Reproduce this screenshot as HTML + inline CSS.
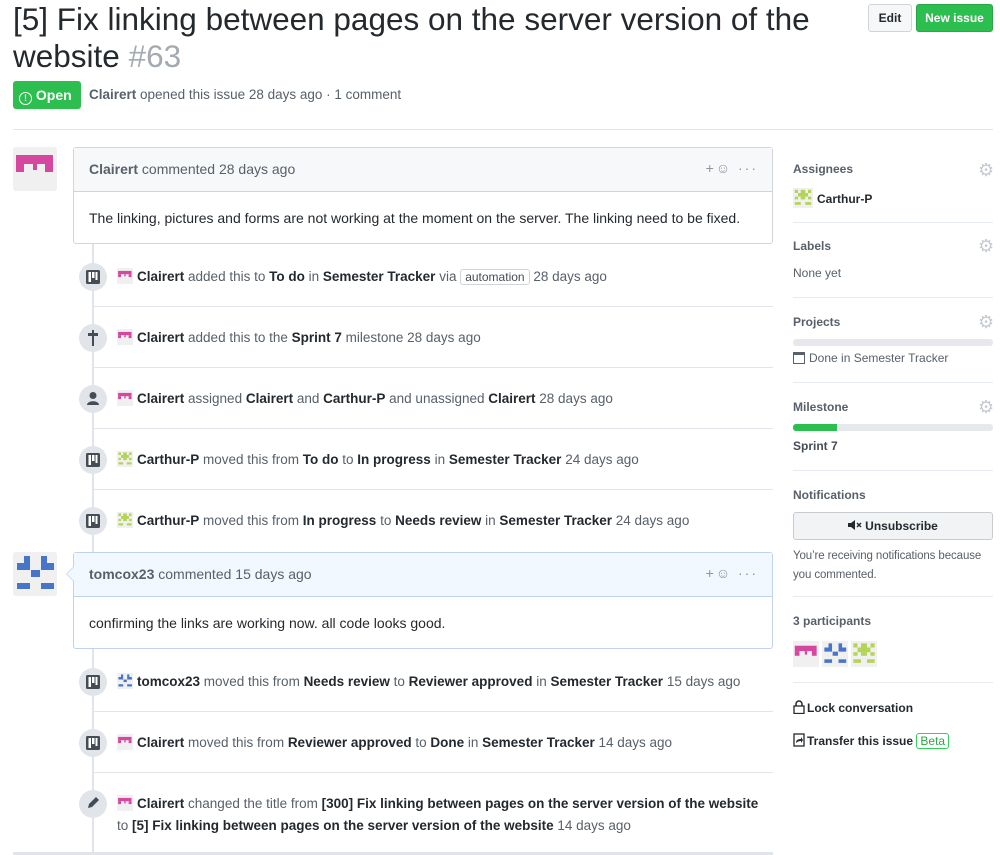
<!DOCTYPE html>
<html><head><meta charset="utf-8"><style>
*{box-sizing:border-box;margin:0;padding:0}
body{width:1000px;height:855px;overflow:hidden;background:#fff;font-family:"Liberation Sans",Arial,sans-serif;color:#24292e;font-size:13.5px;position:relative}
.a{position:absolute}
b{font-weight:bold;color:#24292e}
.g{color:#586069}
h1{position:absolute;left:13px;top:1px;width:830px;font-weight:normal;font-size:31.5px;line-height:37px;color:#24292e}
h1 span{color:#a3aab1}
.btn{position:absolute;top:4px;height:28px;border-radius:3px;font-size:12px;font-weight:bold;line-height:26px;text-align:center}
.av{position:absolute;width:44px;height:44px;border-radius:3px;background:#f0f0f0}
.box{position:absolute;left:73px;width:700px;border:1px solid #d1d5da;border-radius:3px;background:#fff}
.box .hd{height:44px;background:#f6f8fa;border-bottom:1px solid #d1d5da;padding:13px 15px;color:#586069;font-size:14px}
.box .bd{padding:0 15px;font-size:14px;line-height:52px}
.hdr-ic{position:absolute;right:14px;top:12px;color:#8d959e;font-size:14px;letter-spacing:2px}
.line{position:absolute;left:92px;width:2px;background:#e1e4e8}
.ev{position:absolute;left:117px;font-size:13.5px;color:#586069;white-space:nowrap;line-height:22px}
.badge{position:absolute;left:79px;width:28px;height:28px;border-radius:50%;background:#e1e4e8}
.sep{position:absolute;left:93px;width:680px;height:1px;background:#e1e4e8}
.sm{display:inline-block;width:16px;height:16px;vertical-align:-3px;margin-right:4px}
.sb{position:absolute;left:793px;width:200px}
.sbt{font-size:12px;color:#586069;font-weight:bold}
.gear{position:absolute;left:978px;color:#c6cbd1;font-size:18px;line-height:18px}
.hr{position:absolute;left:793px;width:200px;height:1px;background:#e6ebf1}
code{font-family:"Liberation Sans",sans-serif;font-size:12px;border:1px solid #d1d5da;border-radius:3px;padding:0 4px;color:#444d56}
</style></head><body>
<svg width="0" height="0" style="position:absolute">
<defs>
<symbol id="pk" viewBox="0 0 44 44"><rect width="44" height="44" fill="#f0f0f0"/><g fill="#d6479f"><rect x="3" y="8" width="37" height="9"/><rect x="3" y="17" width="8" height="8"/><rect x="32" y="17" width="8" height="8"/><rect x="20" y="17" width="4" height="6"/></g></symbol>
<symbol id="bl" viewBox="0 0 44 44"><rect width="44" height="44" fill="#f0f0f0"/><g fill="#4776c9"><rect x="11" y="4" width="6" height="7"/><rect x="28" y="4" width="6" height="7"/><rect x="4" y="11" width="13" height="7"/><rect x="28" y="11" width="13" height="7"/><rect x="18" y="18" width="9" height="7"/><rect x="4" y="31" width="13" height="6"/><rect x="28" y="31" width="13" height="6"/></g></symbol>
<symbol id="gr" viewBox="0 0 44 44"><rect width="44" height="44" fill="#f0f0f0"/><g fill="#b4d455"><rect x="4" y="4" width="7" height="7"/><rect x="17" y="4" width="10" height="7"/><rect x="33" y="4" width="7" height="7"/><rect x="11" y="11" width="22" height="8"/><rect x="4" y="19" width="7" height="6"/><rect x="17" y="19" width="10" height="6"/><rect x="33" y="19" width="7" height="6"/><rect x="4" y="31" width="13" height="6"/><rect x="27" y="31" width="13" height="6"/></g></symbol>
<symbol id="proj" viewBox="0 0 16 16"><rect x="1" y="1" width="14" height="14" rx="1.5" fill="#444d56"/><rect x="3.5" y="3" width="2.5" height="10" fill="#fff"/><rect x="7" y="3" width="2.5" height="6" fill="#fff"/><rect x="10.5" y="3" width="2" height="8" fill="#fff"/></symbol>
</defs></svg>

<h1>[5] Fix linking between pages on the server version of the website <span>#63</span></h1>
<div class="btn" style="left:868px;width:44px;background:#f5f7f9;border:1px solid #d1d5da;color:#24292e">Edit</div>
<div class="btn" style="left:916px;width:77px;background:#2cbe4e;border:1px solid #28a745;color:#fff">New issue</div>

<div class="a" style="left:13px;top:81px;width:68px;height:28px;border-radius:3px;background:#2cbe4e;color:#fff;font-weight:bold;font-size:14px;line-height:28px;padding-left:6px"><span style="display:inline-block;width:13px;height:13px;border:1.6px solid #fff;border-radius:50%;font-size:9px;line-height:10px;text-align:center;vertical-align:-1px">!</span> Open</div>
<div class="a g" style="left:89px;top:87px;font-size:13.5px"><b style="color:#586069">Clairert</b> opened this issue 28 days ago · 1 comment</div>
<div class="a" style="left:13px;top:129px;width:980px;height:1px;background:#e1e4e8"></div>

<div class="line" style="top:243px;height:310px"></div>
<div class="line" style="top:648px;height:207px"></div>

<svg class="av" style="left:13px;top:147px"><use href="#pk"/></svg>
<div class="box" style="top:147px;height:97px"><div class="hd"><b style="color:#586069">Clairert</b> commented 28 days ago<span class="hdr-ic">+☺ ···</span></div><div class="bd">The linking, pictures and forms are not working at the moment on the server. The linking need to be fixed.</div></div>

<div class="badge" style="top:263px"></div><svg class="a" style="left:85px;top:269px" width="16" height="16"><use href="#proj"/></svg>
<div class="ev" style="top:266px"><svg class="sm"><use href="#pk"/></svg><b>Clairert</b> added this to <b>To do</b> in <b>Semester Tracker</b> via <code>automation</code> 28 days ago</div>
<div class="sep" style="top:306px"></div>

<div class="badge" style="top:324px"></div><svg class="a" style="left:86px;top:330px" width="14" height="16"><rect x="6" y="0" width="2" height="16" fill="#444d56"/><rect x="2" y="3" width="10" height="3" fill="#444d56"/></svg>
<div class="ev" style="top:327px"><svg class="sm"><use href="#pk"/></svg><b>Clairert</b> added this to the <b>Sprint 7</b> milestone 28 days ago</div>
<div class="sep" style="top:367px"></div>

<div class="badge" style="top:385px"></div><svg class="a" style="left:86px;top:391px" width="14" height="16"><circle cx="7" cy="4.5" r="3.5" fill="#444d56"/><path d="M1 14c0-5 12-5 12 0z" fill="#444d56"/></svg>
<div class="ev" style="top:388px"><svg class="sm"><use href="#pk"/></svg><b>Clairert</b> assigned <b>Clairert</b> and <b>Carthur-P</b> and unassigned <b>Clairert</b> 28 days ago</div>
<div class="sep" style="top:428px"></div>

<div class="badge" style="top:446px"></div><svg class="a" style="left:85px;top:452px" width="16" height="16"><use href="#proj"/></svg>
<div class="ev" style="top:449px"><svg class="sm"><use href="#gr"/></svg><b>Carthur-P</b> moved this from <b>To do</b> to <b>In progress</b> in <b>Semester Tracker</b> 24 days ago</div>
<div class="sep" style="top:489px"></div>

<div class="badge" style="top:507px"></div><svg class="a" style="left:85px;top:513px" width="16" height="16"><use href="#proj"/></svg>
<div class="ev" style="top:510px"><svg class="sm"><use href="#gr"/></svg><b>Carthur-P</b> moved this from <b>In progress</b> to <b>Needs review</b> in <b>Semester Tracker</b> 24 days ago</div>

<svg class="av" style="left:13px;top:552px"><use href="#bl"/></svg>
<div class="box" style="top:552px;height:97px;border-color:#c0d3eb"><div class="hd" style="background:#f1f8ff;border-color:#c0d3eb"><b style="color:#586069">tomcox23</b> commented 15 days ago<span class="hdr-ic">+☺ ···</span></div><div class="bd">confirming the links are working now. all code looks good.</div></div>
<div class="a" style="left:66px;top:566px;width:0;height:0;border:8px solid transparent;border-right-color:#c0d3eb;border-left:0"></div>
<div class="a" style="left:67px;top:567px;width:0;height:0;border:7px solid transparent;border-right-color:#f1f8ff;border-left:0"></div>

<div class="badge" style="top:668px"></div><svg class="a" style="left:85px;top:674px" width="16" height="16"><use href="#proj"/></svg>
<div class="ev" style="top:671px"><svg class="sm"><use href="#bl"/></svg><b>tomcox23</b> moved this from <b>Needs review</b> to <b>Reviewer approved</b> in <b>Semester Tracker</b> 15 days ago</div>
<div class="sep" style="top:711px"></div>

<div class="badge" style="top:729px"></div><svg class="a" style="left:85px;top:735px" width="16" height="16"><use href="#proj"/></svg>
<div class="ev" style="top:732px"><svg class="sm"><use href="#pk"/></svg><b>Clairert</b> moved this from <b>Reviewer approved</b> to <b>Done</b> in <b>Semester Tracker</b> 14 days ago</div>
<div class="sep" style="top:772px"></div>

<div class="badge" style="top:790px"></div><svg class="a" style="left:86px;top:796px" width="14" height="14"><path d="M2 12l1-4 7-7 3 3-7 7z" fill="#444d56"/></svg>
<div class="ev" style="top:793px"><svg class="sm"><use href="#pk"/></svg><b>Clairert</b> changed the title from <b>[300] Fix linking between pages on the server version of the website</b><br>to <b>[5] Fix linking between pages on the server version of the website</b> 14 days ago</div>
<div class="a" style="left:13px;top:852px;width:760px;height:3px;background:#e1e4e8"></div>

<div class="sb sbt" style="top:162px">Assignees</div><div class="gear" style="top:161px">⚙</div>
<div class="sb" style="top:188px;font-size:12px;font-weight:bold"><svg class="sm" style="width:20px;height:20px;vertical-align:-5px"><use href="#gr"/></svg>Carthur-P</div>
<div class="hr" style="top:222px"></div>
<div class="sb sbt" style="top:239px">Labels</div><div class="gear" style="top:237px">⚙</div>
<div class="sb g" style="top:266px;font-size:12px">None yet</div>
<div class="hr" style="top:297px"></div>
<div class="sb sbt" style="top:315px">Projects</div><div class="gear" style="top:313px">⚙</div>
<div class="sb" style="top:339px;height:7px;background:#e6e8eb;border-radius:3px"></div>
<div class="sb g" style="top:351px;font-size:12px"><span style="display:inline-block;width:12px;height:12px;border:1.5px solid #586069;vertical-align:-2px;margin-right:4px;border-top-width:3px"></span>Done in Semester Tracker</div>
<div class="hr" style="top:382px"></div>
<div class="sb sbt" style="top:400px">Milestone</div><div class="gear" style="top:398px">⚙</div>
<div class="sb" style="top:424px;height:7px;background:#e6e8eb;border-radius:3px"><div style="width:44px;height:7px;background:#2cbe4e;border-radius:3px 0 0 3px"></div></div>
<div class="sb" style="top:439px;font-size:12px;font-weight:bold;color:#444d56">Sprint 7</div>
<div class="hr" style="top:470px"></div>
<div class="sb sbt" style="top:488px">Notifications</div>
<div class="sb" style="top:512px;height:28px;border:1px solid #c8ccd1;border-radius:3px;background:#f1f3f5;text-align:center;font-size:12px;font-weight:bold;line-height:26px"><svg width="14" height="12" style="vertical-align:-1px;margin-right:3px"><path d="M0 4h3l4-3v10L3 8H0z" fill="#24292e"/><path d="M9 4l4 4M13 4l-4 4" stroke="#24292e" stroke-width="1.4"/></svg>Unsubscribe</div>
<div class="sb g" style="top:547px;font-size:11.5px;line-height:19px;letter-spacing:-0.1px">You’re receiving notifications because you commented.</div>
<div class="hr" style="top:596px"></div>
<div class="sb sbt" style="top:614px">3 participants</div>
<svg class="a" style="left:793px;top:641px" width="26" height="26"><use href="#pk"/></svg>
<svg class="a" style="left:822px;top:641px" width="26" height="26"><use href="#bl"/></svg>
<svg class="a" style="left:851px;top:641px" width="26" height="26"><use href="#gr"/></svg>
<div class="hr" style="top:682px"></div>
<div class="sb" style="top:700px;font-size:12px;font-weight:bold"><svg width="12" height="14" style="vertical-align:-2px;margin-right:2px"><path d="M3 6V4a3 3 0 016 0v2" fill="none" stroke="#24292e" stroke-width="1.5"/><rect x="1" y="6" width="10" height="7.5" fill="none" stroke="#24292e" stroke-width="1.3"/></svg>Lock conversation</div>
<div class="sb" style="top:733px;font-size:12px;font-weight:bold"><svg width="12" height="14" style="vertical-align:-2px;margin-right:2px"><rect x="1" y="1" width="10" height="12" fill="none" stroke="#24292e" stroke-width="1.3"/><path d="M3 10c0-3 2-4 5-4V4l2 3-2 3V8c-2 0-4 1-5 2z" fill="#24292e"/></svg>Transfer this issue <span style="font-weight:normal;border:1px solid #34d058;color:#28a745;border-radius:3px;padding:0 3px">Beta</span></div>
</body></html>
